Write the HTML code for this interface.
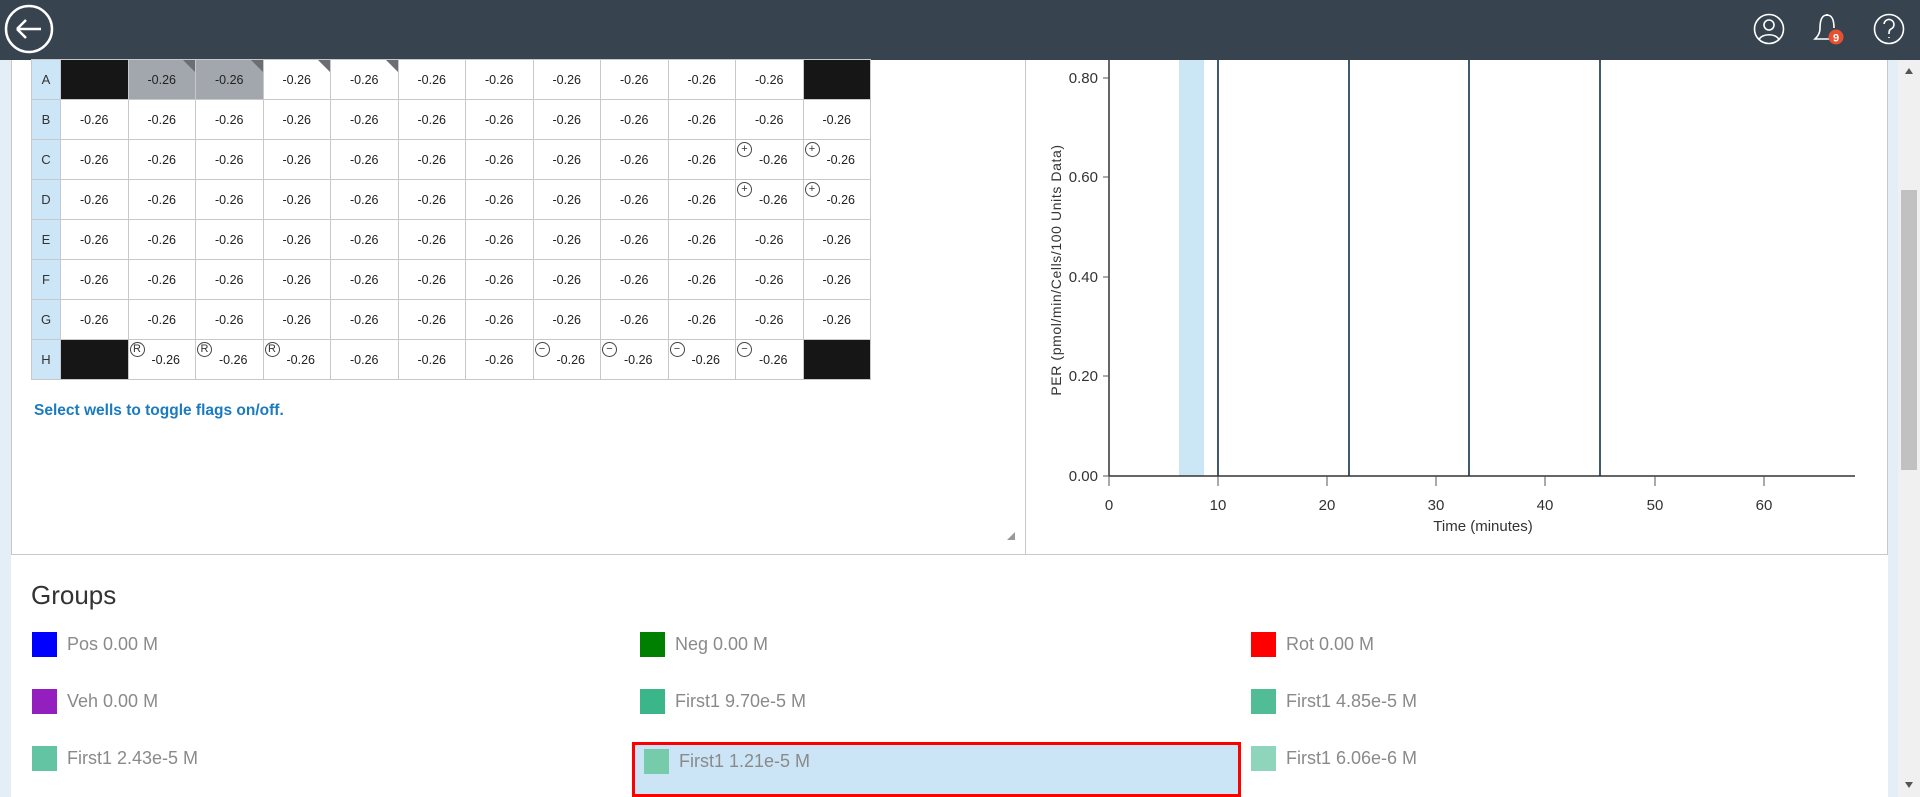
<!DOCTYPE html>
<html><head><meta charset="utf-8"><style>
*{margin:0;padding:0;box-sizing:border-box}
body{width:1920px;height:797px;overflow:hidden;background:#e3eef6;font-family:"Liberation Sans",sans-serif;position:relative}
.hdr{position:absolute;left:0;top:0;width:1920px;height:60px;background:#37434f}
.panelL{position:absolute;left:11px;top:60px;width:1014px;height:495px;background:#fff;border-left:1px solid #c8c8c8;border-bottom:1px solid #c8c8c8}
.panelR{position:absolute;left:1025px;top:60px;width:863px;height:495px;background:#fff;border-left:1px solid #c8c8c8;border-bottom:1px solid #c8c8c8;border-right:1px solid #c8c8c8}
.bottom{position:absolute;left:11px;top:555px;width:1877px;height:242px;background:#fff}
table{position:absolute;left:31px;top:59px;border-collapse:collapse;table-layout:fixed;width:840px}
td{border:1px solid #c8c8c8;height:40px;text-align:center;font-size:12.5px;color:#222;position:relative;width:67.5px}
td.l{width:29px;background:#cde6f7;color:#333;font-size:13px}
td.k{background:#161616}
td.g{background:#a2a7ad}
td.t::after{content:"";position:absolute;right:0;top:0;border-top:12px solid #6b6f74;border-left:12px solid transparent}
td.f{padding-top:1px;padding-left:8px}
.fl{position:absolute;left:1px;top:2px;width:15px;height:15px;border:1px solid #444;border-radius:50%;font-size:11px;line-height:13px;text-align:center;color:#333}
.sel{position:absolute;left:34px;top:402px;color:#1a7bc0;font-weight:bold;font-size:15.5px}
.sb{position:absolute;left:1898px;top:60px;width:22px;height:737px;background:#f0f0f0}
.grp{position:absolute;left:31px;top:580px;font-size:26px;color:#333}
.it{position:absolute;font-size:18px;color:#8a8a8a;height:25px;line-height:25px;padding-left:35px}
.it i{position:absolute;left:0;top:0;width:25px;height:25px}
</style></head><body>
<div class="hdr"></div>
<svg style="position:absolute;left:0;top:0" width="60" height="60"><circle cx="29" cy="29" r="23" fill="none" stroke="#fff" stroke-width="2.5"/><path d="M17 29 H41 M17 29 L26 20 M17 29 L26 38" stroke="#fff" stroke-width="2.5" fill="none"/></svg>
<svg style="position:absolute;left:1740px;top:0" width="180" height="60"><g fill="none" stroke="#fff" stroke-width="1.6"><circle cx="29" cy="29" r="14.5"/><circle cx="29" cy="25" r="5"/><path d="M19 40 C21 33 37 33 39 40"/><circle cx="149" cy="29" r="14.5"/><path d="M144 24 a5 5 0 1 1 7 5 c-2 1 -2 3 -2 5 M149 37 v1"/><path d="M87 16 v-2 M87 15 c-6 0 -7 7 -7 13 c0 6 -3 9 -5 11 h24"/><path d="M87 15 c6 0 7 7 7 13"/></g><circle cx="96" cy="37" r="7.5" fill="#e7512f"/><text x="96" y="41.5" font-size="11" font-weight="bold" fill="#fff" text-anchor="middle" font-family="Liberation Sans">9</text></svg>
<div class="panelL"></div>
<div class="panelR"></div>
<div class="sb"><div style="position:absolute;left:3px;top:130px;width:16px;height:280px;background:#c1c1c1"></div><div style="position:absolute;left:7px;top:8px;border-bottom:6px solid #555;border-left:4px solid transparent;border-right:4px solid transparent"></div><div style="position:absolute;left:7px;top:722px;border-top:6px solid #555;border-left:4px solid transparent;border-right:4px solid transparent"></div></div>
<table>
<tr><td class="l">A</td><td class="k"></td><td class="g t">-0.26</td><td class="g t">-0.26</td><td class="t">-0.26</td><td class="t">-0.26</td><td>-0.26</td><td>-0.26</td><td>-0.26</td><td>-0.26</td><td>-0.26</td><td>-0.26</td><td class="k"></td></tr>
<tr><td class="l">B</td><td>-0.26</td><td>-0.26</td><td>-0.26</td><td>-0.26</td><td>-0.26</td><td>-0.26</td><td>-0.26</td><td>-0.26</td><td>-0.26</td><td>-0.26</td><td>-0.26</td><td>-0.26</td></tr>
<tr><td class="l">C</td><td>-0.26</td><td>-0.26</td><td>-0.26</td><td>-0.26</td><td>-0.26</td><td>-0.26</td><td>-0.26</td><td>-0.26</td><td>-0.26</td><td>-0.26</td><td class="f"><span class="fl">+</span>-0.26</td><td class="f"><span class="fl">+</span>-0.26</td></tr>
<tr><td class="l">D</td><td>-0.26</td><td>-0.26</td><td>-0.26</td><td>-0.26</td><td>-0.26</td><td>-0.26</td><td>-0.26</td><td>-0.26</td><td>-0.26</td><td>-0.26</td><td class="f"><span class="fl">+</span>-0.26</td><td class="f"><span class="fl">+</span>-0.26</td></tr>
<tr><td class="l">E</td><td>-0.26</td><td>-0.26</td><td>-0.26</td><td>-0.26</td><td>-0.26</td><td>-0.26</td><td>-0.26</td><td>-0.26</td><td>-0.26</td><td>-0.26</td><td>-0.26</td><td>-0.26</td></tr>
<tr><td class="l">F</td><td>-0.26</td><td>-0.26</td><td>-0.26</td><td>-0.26</td><td>-0.26</td><td>-0.26</td><td>-0.26</td><td>-0.26</td><td>-0.26</td><td>-0.26</td><td>-0.26</td><td>-0.26</td></tr>
<tr><td class="l">G</td><td>-0.26</td><td>-0.26</td><td>-0.26</td><td>-0.26</td><td>-0.26</td><td>-0.26</td><td>-0.26</td><td>-0.26</td><td>-0.26</td><td>-0.26</td><td>-0.26</td><td>-0.26</td></tr>
<tr><td class="l">H</td><td class="k"></td><td class="f"><span class="fl">R</span>-0.26</td><td class="f"><span class="fl">R</span>-0.26</td><td class="f"><span class="fl">R</span>-0.26</td><td>-0.26</td><td>-0.26</td><td>-0.26</td><td class="f"><span class="fl">−</span>-0.26</td><td class="f"><span class="fl">−</span>-0.26</td><td class="f"><span class="fl">−</span>-0.26</td><td class="f"><span class="fl">−</span>-0.26</td><td class="k"></td></tr>
</table>
<div class="sel">Select wells to toggle flags on/off.</div>
<svg style="position:absolute;left:1005px;top:530px" width="12" height="12"><path d="M2 10 L10 2 L10 10 Z" fill="#999"/></svg>
<svg style="position:absolute;left:1026px;top:60px" width="862" height="494" font-family="Liberation Sans" font-size="15" fill="#333">
<rect x="153" y="0" width="25" height="416" fill="#cbe7f5"/>
<g stroke="#3e5a6c" stroke-width="2"><line x1="192" y1="0" x2="192" y2="416"/><line x1="323" y1="0" x2="323" y2="416"/><line x1="443" y1="0" x2="443" y2="416"/><line x1="574" y1="0" x2="574" y2="416"/></g>
<g stroke="#333" stroke-width="1.5"><line x1="83" y1="0" x2="83" y2="416"/><line x1="83" y1="416" x2="829" y2="416"/></g>
<g stroke="#555" stroke-width="1"><line x1="77" y1="18" x2="83" y2="18"/><line x1="77" y1="117" x2="83" y2="117"/><line x1="77" y1="217" x2="83" y2="217"/><line x1="77" y1="316" x2="83" y2="316"/><line x1="77" y1="416" x2="83" y2="416"/>
<line x1="83" y1="416" x2="83" y2="426"/><line x1="192" y1="416" x2="192" y2="426"/><line x1="301" y1="416" x2="301" y2="426"/><line x1="410" y1="416" x2="410" y2="426"/><line x1="519" y1="416" x2="519" y2="426"/><line x1="629" y1="416" x2="629" y2="426"/><line x1="738" y1="416" x2="738" y2="426"/></g>
<g text-anchor="end"><text x="72" y="23">0.80</text><text x="72" y="122">0.60</text><text x="72" y="222">0.40</text><text x="72" y="321">0.20</text><text x="72" y="421">0.00</text></g>
<g text-anchor="middle"><text x="83" y="450">0</text><text x="192" y="450">10</text><text x="301" y="450">20</text><text x="410" y="450">30</text><text x="519" y="450">40</text><text x="629" y="450">50</text><text x="738" y="450">60</text><text x="457" y="471">Time (minutes)</text></g>
<text transform="translate(35,210) rotate(-90)" text-anchor="middle" font-size="14" letter-spacing="0.6">PER (pmol/min/Cells/100 Units Data)</text>
</svg>
<div class="bottom"></div>
<div class="grp">Groups</div>
<div style="position:absolute;left:632px;top:742px;width:609px;height:55px;background:#cbe5f6;border:3px solid #f00"></div>
<div class="it" style="left:32px;top:632px"><i style="background:#0000ff"></i>Pos 0.00 M</div>
<div class="it" style="left:640px;top:632px"><i style="background:#008000"></i>Neg 0.00 M</div>
<div class="it" style="left:1251px;top:632px"><i style="background:#ff0000"></i>Rot 0.00 M</div>
<div class="it" style="left:32px;top:689px"><i style="background:#931fbf"></i>Veh 0.00 M</div>
<div class="it" style="left:640px;top:689px"><i style="background:#3bb58a"></i>First1 9.70e-5 M</div>
<div class="it" style="left:1251px;top:689px"><i style="background:#50bd97"></i>First1 4.85e-5 M</div>
<div class="it" style="left:32px;top:746px"><i style="background:#63c4a3"></i>First1 2.43e-5 M</div>
<div class="it" style="left:644px;top:749px"><i style="background:#76cbab"></i>First1 1.21e-5 M</div>
<div class="it" style="left:1251px;top:746px"><i style="background:#8ed5bc"></i>First1 6.06e-6 M</div>
</body></html>
